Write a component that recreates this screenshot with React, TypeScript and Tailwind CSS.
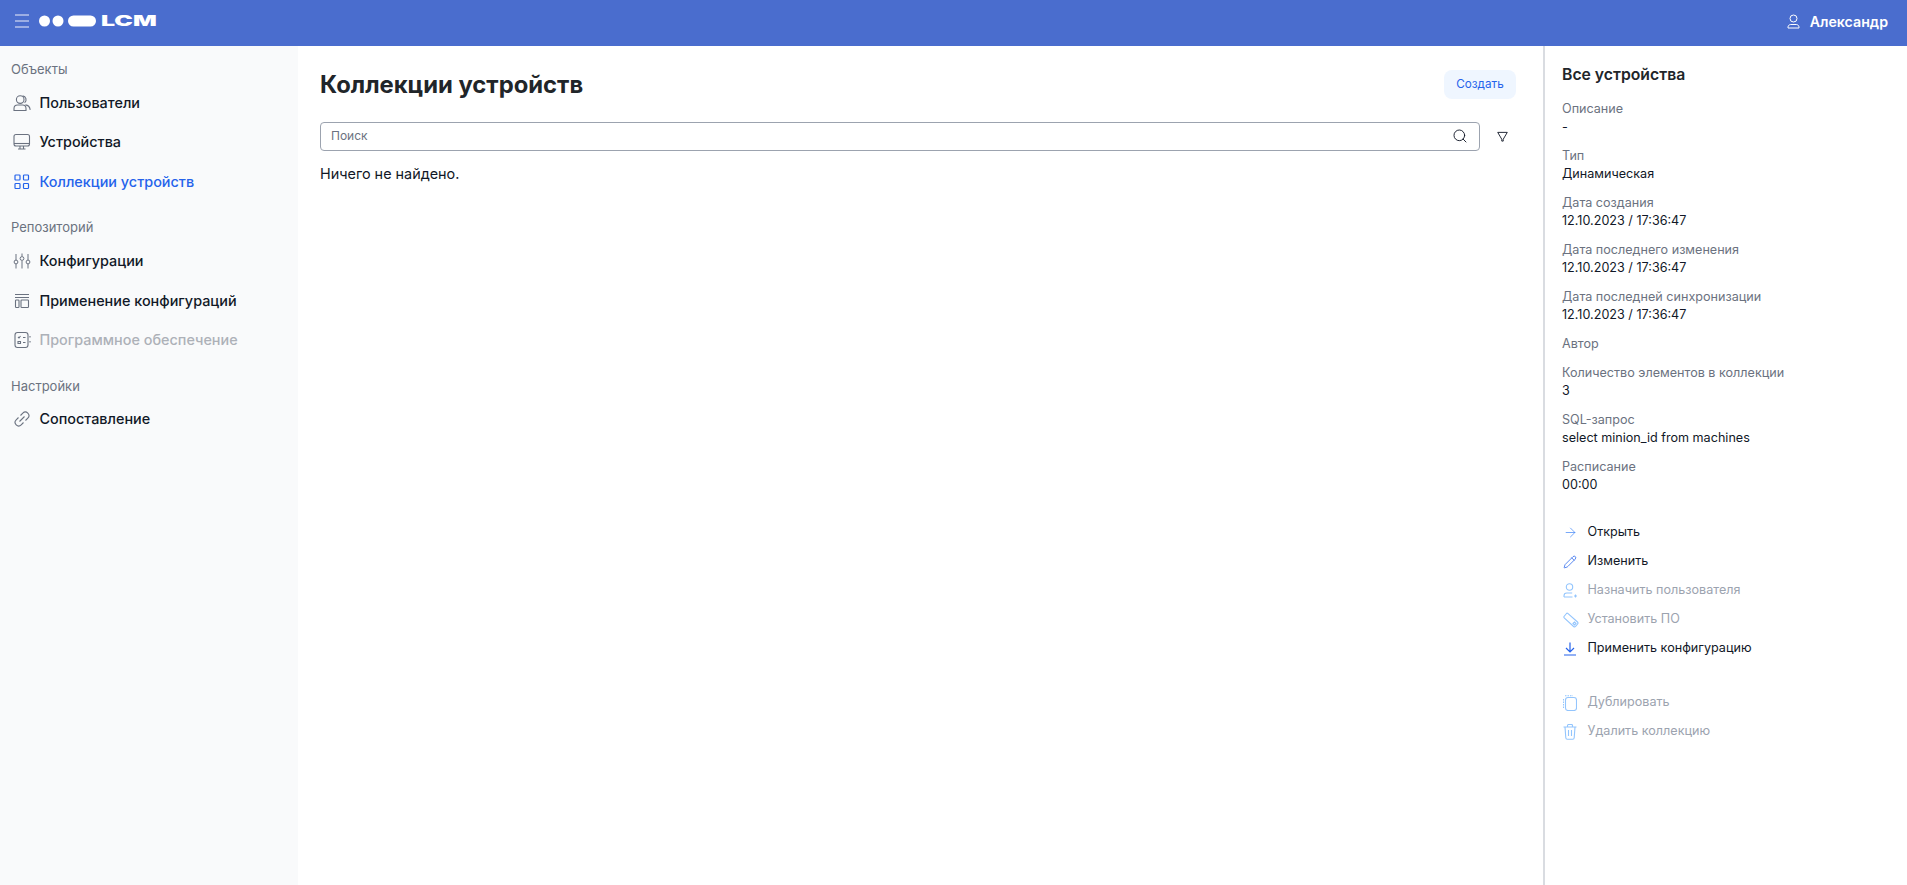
import React from 'react';
import { ArrowRight, Pencil, Search } from 'lucide-react';

const font = "font-['Inter','Noto_Sans',sans-serif]";

const UsersIcon = () => (
  <svg width="18" height="18" viewBox="0 0 18 18" fill="none" stroke="#6b7280" strokeWidth="1.1">
    <circle cx="7.200" cy="5.600" r="3.800" />
    <path d="M9.600 1.900a3.800 3.800 0 0 1 2 6.800" />
    <path d="M1 16.500v-2c0-2 1.600-3.500 3.600-3.500h5c2 0 3.400 1.500 3.400 3.500v2z" />
    <path d="M12.400 10.900c2.400.2 4.400 1.800 4.800 5" />
  </svg>
);

const MonitorIcon = () => (
  <svg width="18" height="18" viewBox="0 0 18 18" fill="none" stroke="#6b7280" strokeWidth="1.1">
    <rect x="1" y="1.500" width="15.500" height="11.500" rx="2" />
    <path d="M1 10.500h15.500" />
    <path d="M7 13v2.500M10.500 13v2.500M5 16h7.500" />
  </svg>
);

const GridIcon = () => (
  <svg width="16" height="16" viewBox="0 0 16 16" fill="none" stroke="#2563eb" strokeWidth="1.200">
    <rect x="1" y="1" width="5" height="5" rx=".8" />
    <rect x="9.500" y="1" width="5" height="5" rx=".8" />
    <rect x="1" y="9.500" width="5" height="5" rx=".8" />
    <rect x="9.500" y="9.500" width="5" height="5" rx=".8" />
  </svg>
);

const SlidersIcon = () => (
  <svg width="18" height="18" viewBox="0 0 18 18" fill="none" stroke="#6b7280" strokeWidth="1">
    <path d="M3 2v6M3 12v4.500M9 1.500v2.500M9 9v7.500M15 2v6M15 12v4.500" />
    <circle cx="3" cy="10" r="1.900" />
    <circle cx="9" cy="6.500" r="1.900" />
    <circle cx="15" cy="10" r="1.900" />
  </svg>
);

const LayoutIcon = () => (
  <svg width="16" height="16" viewBox="0 0 16 16" fill="none" stroke="#6b7280" strokeWidth="1.100">
    <path d="M1 1.500h14M1 4.500h14" />
    <rect x="1.500" y="7" width="3.500" height="7.500" rx=".8" />
    <rect x="7" y="7" width="7.500" height="7.500" rx=".8" />
  </svg>
);

const SoftwareIcon = () => (
  <svg width="18" height="18" viewBox="0 0 18 18" fill="none" stroke="#6b7280" strokeWidth="1.100">
    <rect x="2" y="1.500" width="13" height="15" rx="2.500" />
    <path d="M5 6l1 1 1.500-2M10 6.500h2.500M5 10.500h2.500v2H5zM10 11.500h2.500M17 5v1.500M17 10v1.500" />
  </svg>
);

const LinkIcon = () => (
  <svg width="18" height="18" viewBox="0 0 18 18" fill="none" stroke="#6b7280" strokeWidth="1.100">
    <path d="M7.500 5.500l2.300-2.300a3.500 3.500 0 0 1 5 5l-2.300 2.300" />
    <path d="M10.500 12.500l-2.300 2.300a3.500 3.500 0 0 1-5-5l2.300-2.300" />
    <path d="M6.500 11.500l5-5" />
  </svg>
);

const UserIcon = () => (
  <svg width="15" height="15" viewBox="0 0 15 15" fill="none" stroke="#fff" strokeWidth="1">
    <circle cx="7.500" cy="4.500" r="3.500" />
    <path d="M2 14v-.8c0-1.500 1.200-2.700 2.700-2.700h5.600c1.500 0 2.700 1.200 2.700 2.700v.8z" />
  </svg>
);

const UserPlusIcon = () => (
  <svg width="15" height="15" viewBox="0 0 15 15" fill="none" stroke="#93c5fd" strokeWidth="1.100">
    <circle cx="6.500" cy="4" r="3.200" />
    <path d="M1 14v-1.200C1 11.200 2.200 10 3.800 10h5.400M1 14h8.500M12.500 11.500v3M11 13h3" />
  </svg>
);

const TagIcon = () => (
  <svg width="16" height="16" viewBox="0 0 16 16" fill="none" stroke="#93c5fd" strokeWidth="1.100">
    <path d="M1 4.500L3.500 1.500a1 1 0 0 1 1.300-.1L14.500 10a1.500 1.500 0 0 1 .1 2l-2 2.400a1.500 1.500 0 0 1-2 .1L1.200 5.800a1 1 0 0 1-.2-1.300z" />
    <path d="M10 11.500l1.500-1.500 1.500 1.500-1.500 1.500z" />
  </svg>
);

const CopyIcon = () => (
  <svg width="14" height="16" viewBox="0 0 14 16" fill="none" stroke="#93c5fd" strokeWidth="1.100">
    <rect x="2.500" y="2.500" width="11" height="13" rx="2.500" />
    <path d="M.5 13V3.500M2 .8h8" strokeDasharray="1.500 1" />
  </svg>
);

const DownloadIcon = () => (
  <svg width="14" height="14" viewBox="0 0 14 14" fill="none" stroke="#2563eb" strokeWidth="1.200">
    <path d="M7 .5v9M3 6l4 4 4-4M1 13h12" />
  </svg>
);

const TrashIcon = () => (
  <svg width="14" height="16" viewBox="0 0 14 16" fill="none" stroke="#93c5fd" strokeWidth="1.100">
    <path d="M.5 3h13M4.500 3V1.500a1 1 0 0 1 1-1h3a1 1 0 0 1 1 1V3M2 3l.8 10.800a1.500 1.500 0 0 0 1.500 1.400h5.400a1.500 1.500 0 0 0 1.500-1.400L12 3M5.500 6v6M8.500 6v6" />
  </svg>
);

const Section = ({ title, children, className = '', listClass = 'mt-[4px]' }: { title: string; children: React.ReactNode; className?: string; listClass?: string }) => (
  <div className={className}>
    <div className="h-[19px] pl-[11px] text-[13px] leading-[19px] text-[#6b7280]">{title}</div>
    <div className={`flex flex-col ${listClass}`}>{children}</div>
  </div>
);

const NavItem = ({ icon, label, tone = 'text-[#111827]' }: { icon: React.ReactNode; label: string; tone?: string }) => (
  <div className={`flex h-[39.500px] items-center text-[14.400px] font-medium ${tone}`}>
    <span className="flex w-[39.500px] shrink-0 justify-end pr-[9px]">
      <span className="flex w-[18px] justify-center">{icon}</span>
    </span>
    <span>{label}</span>
  </div>
);

const Field = ({ label, value }: { label: string; value?: string }) => (
  <div className="mb-[11px] text-[12.600px] leading-[18px]">
    <div className="text-[#6b7280]">{label}</div>
    {value && <div className="text-[#111827]">{value}</div>}
  </div>
);

const Action = ({ icon, label, disabled }: { icon: React.ReactNode; label: string; disabled?: boolean }) => (
  <div className={`flex h-[29px] items-center text-[12.600px] ${disabled ? 'text-[#9ca3af]' : 'text-[#111827]'}`}>
    <span className="flex w-[25.500px] shrink-0 justify-start pl-px">{icon}</span>
    <span>{label}</span>
  </div>
);

export default function App() {
  return (
    <div className={`flex h-[885px] flex-col overflow-hidden bg-white ${font}`}>
      <header className="flex h-[46px] shrink-0 items-center justify-between bg-[#4a6dce] pb-[2px] pl-[15px] pr-[19px] text-white">
        <div className="flex items-center gap-[10px] pb-[2px]">
          <svg width="14" height="14" viewBox="0 0 14 14" stroke="#fff" strokeWidth="1" opacity=".9">
            <path d="M0 1h14M0 7h14M0 13h14" />
          </svg>
          <svg width="58" height="12" viewBox="0 0 58 12" fill="#fff">
            <circle cx="5.500" cy="6" r="5.500" />
            <circle cx="19" cy="6" r="5.500" />
            <rect x="29" y=".5" width="28" height="11" rx="5.500" />
          </svg>
          <span className="-ml-[6px] inline-block w-[56px] origin-left scale-x-[1.660] text-[15px] font-black leading-[14px]">LCM</span>
        </div>
        <div className="flex items-center gap-[9px] text-[14.200px] font-semibold">
          <UserIcon />
          <span>Александр</span>
        </div>
      </header>

      <div className="flex min-h-0 flex-1">
        <aside className="w-[298px] shrink-0 bg-[#f9fafb] pt-[14px]">
          <Section title="Объекты">
            <NavItem icon={<UsersIcon />} label="Пользователи" />
            <NavItem icon={<MonitorIcon />} label="Устройства" />
            <NavItem icon={<GridIcon />} label="Коллекции устройств" tone="text-[#2563eb]" />
          </Section>
          <Section title="Репозиторий" className="mt-[16px]" listClass="mt-[5px]">
            <NavItem icon={<SlidersIcon />} label="Конфигурации" />
            <NavItem icon={<LayoutIcon />} label="Применение конфигураций" />
            <NavItem icon={<SoftwareIcon />} label="Программное обеспечение" tone="text-[#adb1b8]" />
          </Section>
          <Section title="Настройки" className="mt-[17px]" listClass="mt-[3px]">
            <NavItem icon={<LinkIcon />} label="Сопоставление" />
          </Section>
        </aside>

        <main className="min-w-0 flex-1 pl-[22px] pr-[27px] pt-[24px]">
          <div className="flex h-[29px] items-center justify-between">
            <h1 className="text-[23.800px] font-bold leading-[29px] text-[#212529]">Коллекции устройств</h1>
            <button className="h-[29px] w-[72px] rounded-lg bg-[#eff6ff] text-[11.700px] text-[#2563eb]">Создать</button>
          </div>
          <div className="mt-[23px] flex items-center">
            <div className="flex h-[29px] flex-1 items-center justify-between rounded border border-[#9ca3af] pb-[1px] pl-[10px] pr-[11px]">
              <span className="text-xs text-[#6b7280]">Поиск</span>
              <Search size={16} color="#111827" strokeWidth={1.4} />
            </div>
            <span className="flex w-[36px] justify-center pl-[8px]">
              <svg width="11" height="11" viewBox="0 0 12 12" fill="none" stroke="#111827" strokeWidth="1">
                <path d="M.8 1.500h10.400L6.800 9v2h-1.600V9z" />
              </svg>
            </span>
          </div>
          <p className="mt-[13px] text-[14.400px] leading-[19px] text-[#111827]">Ничего не найдено.</p>
        </main>

        <aside className="w-[364px] shrink-0 border-l-2 border-[#d9dce1] pl-[17px] pr-4 pt-[18px]">
          <h2 className="mb-[14px] text-[15.750px] font-semibold leading-[22px] text-[#212529]">Все устройства</h2>
          <Field label="Описание" value="-" />
          <Field label="Тип" value="Динамическая" />
          <Field label="Дата создания" value="12.10.2023 / 17:36:47" />
          <Field label="Дата последнего изменения" value="12.10.2023 / 17:36:47" />
          <Field label="Дата последней синхронизации" value="12.10.2023 / 17:36:47" />
          <Field label="Автор" />
          <Field label="Количество элементов в коллекции" value="3" />
          <Field label="SQL-запрос" value="select minion_id from machines" />
          <Field label="Расписание" value="00:00" />
          <div className="mt-[24px] flex flex-col">
            <Action icon={<ArrowRight size={15} color="#3b82f6" strokeWidth={1.100} />} label="Открыть" />
            <Action icon={<Pencil size={14} color="#2563eb" strokeWidth={1.300} />} label="Изменить" />
            <Action icon={<UserPlusIcon />} label="Назначить пользователя" disabled />
            <Action icon={<TagIcon />} label="Установить ПО" disabled />
            <Action icon={<DownloadIcon />} label="Применить конфигурацию" />
          </div>
          <div className="mt-[25px] flex flex-col">
            <Action icon={<CopyIcon />} label="Дублировать" disabled />
            <Action icon={<TrashIcon />} label="Удалить коллекцию" disabled />
          </div>
        </aside>
      </div>
    </div>
  );
}
